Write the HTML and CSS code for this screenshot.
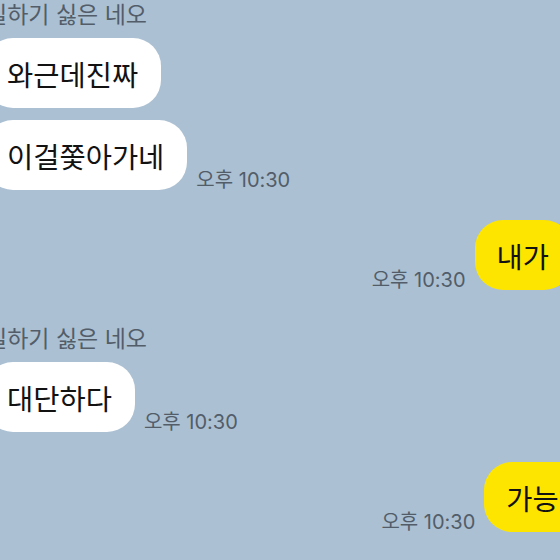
FILE: index.html
```html
<!DOCTYPE html>
<html lang="ko">
<head>
<meta charset="utf-8">
<title>채팅</title>
<link rel="stylesheet" href="styles.css">
</head>
<body>
<main class="chat">
  <section class="group other">
    <div class="name">일하기 싫은 네오</div>
    <div class="row">
      <div class="bubble white">와근데진짜</div>
    </div>
    <div class="row">
      <div class="bubble white">이걸쫓아가네</div>
      <span class="time">오후 10:30</span>
    </div>
  </section>

  <section class="group me">
    <div class="row">
      <span class="time">오후 10:30</span>
      <div class="bubble yellow">내가</div>
    </div>
  </section>

  <section class="group other">
    <div class="name">일하기 싫은 네오</div>
    <div class="row">
      <div class="bubble white">대단하다</div>
      <span class="time">오후 10:30</span>
    </div>
  </section>

  <section class="group me">
    <div class="row cropped">
      <span class="time">오후 10:30</span>
      <div class="bubble yellow">가능해</div>
    </div>
  </section>
</main>
</body>
</html>
```

FILE: styles.css
```css
html, body {
  margin: 0;
  padding: 0;
  width: 560px;
  height: 560px;
  overflow: hidden;
  background: #abc0d2;
}

body {
  font-family: "Noto Sans CJK KR", "Noto Sans", sans-serif;
  color: #121212;
}

.chat {
  margin: -4px -12px 0 -15px;
  display: flex;
  flex-direction: column;
  gap: 30px;
}

.group {
  display: flex;
  flex-direction: column;
  gap: 12px;
}

.group.other .name {
  margin-top: 5px;
  margin-bottom: 1px;
  margin-left: 1px;
  font-size: 23px;
  line-height: 24px;
  color: #525d69;
}

.row {
  display: flex;
  align-items: flex-end;
}

.group.me .row {
  justify-content: flex-end;
}

.group.me .row.cropped {
  margin-right: -36px;
}

.bubble {
  height: 70px;
  box-sizing: border-box;
  padding: 0 23px 0 22px;
  display: flex;
  align-items: center;
  font-size: 28.5px;
  border-radius: 28px;
  white-space: nowrap;
}

.bubble.white {
  background: #ffffff;
}

.bubble.yellow {
  background: #fee500;
}

.time {
  font-family: "Inter", "Noto Sans CJK KR", sans-serif;
  font-size: 20px;
  line-height: 20px;
  color: #525d69;
  white-space: nowrap;
}

.group.other .time {
  margin-left: 9px;
}

.group.me .time {
  margin-right: 9px;
}
```
